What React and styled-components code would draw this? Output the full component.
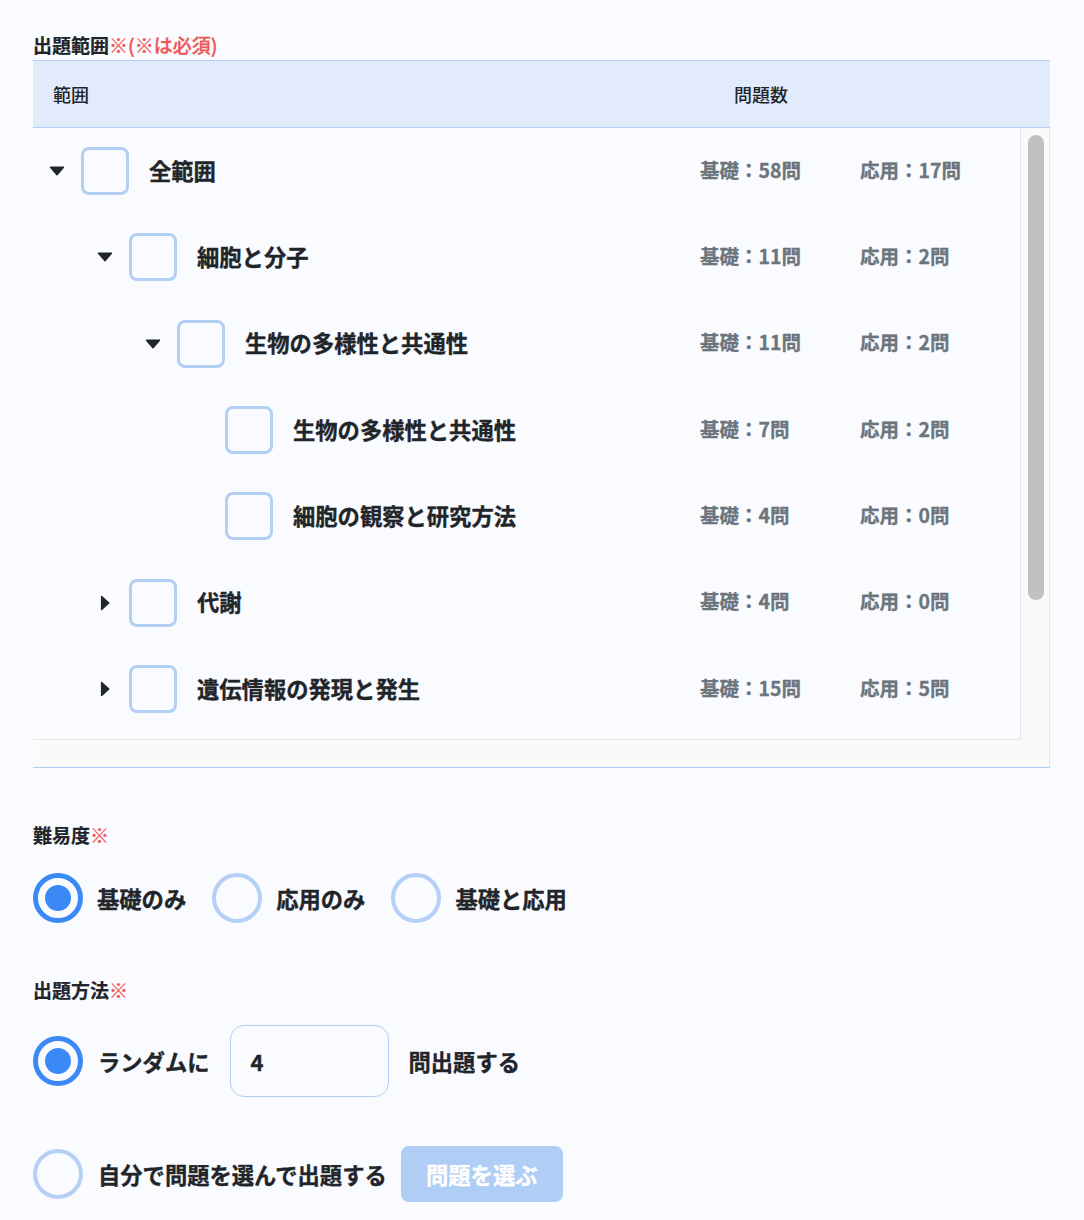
import React from "react";
import styled, { createGlobalStyle } from "styled-components";

const Global = createGlobalStyle`
  html, body { margin: 0; padding: 0; background: #f9fbff; }
  body {
    font-family: "Noto Sans CJK JP", "Noto Sans", sans-serif;
    color: #212529;
  }
  * { box-sizing: border-box; }
`;

const Page = styled.div`
  padding: 32px 34px 20px 33px;
  width: 1084px;
`;

const SectionTitle = styled.div`
  font-size: 19px;
  line-height: 26px;
  font-weight: 700;
  color: #212529;
  -webkit-text-stroke: 0.2px #212529;
  margin-top: ${(p) => p.$mt || 0}px;
`;

const Req = styled.span`
  color: #f05656;
  font-weight: 500;
  -webkit-text-stroke: 0.3px #f05656;
`;

const Table = styled.div`
  width: 1017px;
  margin-top: 2px;
`;

const Header = styled.div`
  display: grid;
  grid-template-columns: 1fr 120px 229px;
  align-items: center;
  height: 68px;
  background: #e1ebfb;
  border-top: 1px solid #b3cff6;
  border-bottom: 1px solid #b3cff6;
  font-size: 18px;
  font-weight: 500;
  color: #212529;
`;

const HeadCell = styled.div`
  padding-left: ${(p) => p.$pl || 0}px;
  text-align: ${(p) => p.$align || "left"};
`;

const Body = styled.div`
  display: grid;
  grid-template-columns: 1fr 28px;
  grid-template-rows: 612px 27px;
  background: #fafafa;
  border-right: 1px solid #e6e6e6;
  border-bottom: 1px solid #aecbf5;
`;

const Content = styled.div`
  background: #f9fbff;
  border-right: 1px solid #e6e6e6;
  border-bottom: 1px solid #e6e6e6;
  overflow: hidden;
`;

const Track = styled.div`
  padding: 7px 0 0 7px;
`;

const Thumb = styled.div`
  width: 16px;
  height: 465px;
  border-radius: 8px;
  background: #c1c1c1;
`;

const Row = styled.div`
  display: grid;
  grid-template-columns: 1fr 160px 160px;
  align-items: center;
  height: 86.33px;
`;

const NameCell = styled.div`
  display: flex;
  align-items: center;
  padding-left: ${(p) => 16 + p.$level * 48}px;
`;

const CaretBox = styled.div`
  width: 16px;
  height: 16px;
  display: flex;
  align-items: center;
  justify-content: center;
  margin-right: 16px;
  flex-shrink: 0;
`;

const Check = styled.div`
  width: 48px;
  height: 48px;
  border: 3px solid #b3cff6;
  border-radius: 8px;
  background: #f9fbff;
  flex-shrink: 0;
  margin-right: 20px;
`;

const Label = styled.span`
  font-size: 22.3px;
  line-height: 28px;
  margin-top: -3px;
  font-weight: 700;
  color: #212529;
  -webkit-text-stroke: 0.35px #212529;
  white-space: nowrap;
`;

const Count = styled.div`
  font-size: 19.5px;
  line-height: 26px;
  margin-top: -3px;
  font-weight: 700;
  color: #6c757d;
  -webkit-text-stroke: 0.3px #6c757d;
  white-space: nowrap;
`;

const Choices = styled.div`
  display: flex;
  align-items: center;
  margin-top: ${(p) => p.$mt || 0}px;
  min-height: ${(p) => p.$h || 50}px;
`;

const Radio = styled.span`
  width: 50px;
  height: 50px;
  border-radius: 50%;
  border: ${(p) => (p.$on ? "5px solid #3a89f7" : "4px solid #b5cff6")};
  display: flex;
  align-items: center;
  justify-content: center;
  flex-shrink: 0;
  background: #f9fbff;
  &::after {
    content: "";
    display: ${(p) => (p.$on ? "block" : "none")};
    width: 26px;
    height: 26px;
    border-radius: 50%;
    background: #3a89f7;
  }
`;

const RadioLabel = styled.span`
  font-size: 22.3px;
  font-weight: 700;
  color: #212529;
  -webkit-text-stroke: 0.35px #212529;
  margin-left: ${(p) => p.$ml || 14}px;
  margin-right: ${(p) => p.$mr || 0}px;
  white-space: nowrap;
`;

const NumInput = styled.div`
  width: 159px;
  height: 72px;
  border: 1px solid #b3cdf5;
  border-radius: 14px;
  display: flex;
  align-items: center;
  padding-left: 20px;
  font-size: 22px;
  font-weight: 700;
  color: #212529;
  -webkit-text-stroke: 0.35px #212529;
  background: #f9fbff;
`;

const PickButton = styled.button`
  height: 56px;
  width: 162px;
  border: none;
  border-radius: 8px;
  background: #afcdf5;
  color: #fff;
  font-family: inherit;
  font-size: 22.3px;
  font-weight: 700;
  -webkit-text-stroke: 0.35px #fff;
  margin-left: 14px;
  padding: 0;
`;

function Caret({ open }) {
  if (open) {
    return (
      <svg width="16" height="10" viewBox="0 0 16 10">
        <path d="M1.5 1.2 H14.5 L8 8.8 Z" fill="#212529" stroke="#212529" strokeWidth="1.4" strokeLinejoin="round" />
      </svg>
    );
  }
  return (
    <svg width="10" height="16" viewBox="0 0 10 16">
      <path d="M1.6 1.5 V14.5 L8.8 8 Z" fill="#212529" stroke="#212529" strokeWidth="1.4" strokeLinejoin="round" />
    </svg>
  );
}

const rows = [
  { level: 0, caret: "down", name: "全範囲", basic: 58, adv: 17 },
  { level: 1, caret: "down", name: "細胞と分子", basic: 11, adv: 2 },
  { level: 2, caret: "down", name: "生物の多様性と共通性", basic: 11, adv: 2 },
  { level: 3, caret: null, name: "生物の多様性と共通性", basic: 7, adv: 2 },
  { level: 3, caret: null, name: "細胞の観察と研究方法", basic: 4, adv: 0 },
  { level: 1, caret: "right", name: "代謝", basic: 4, adv: 0 },
  { level: 1, caret: "right", name: "遺伝情報の発現と発生", basic: 15, adv: 5 },
];

export default function App() {
  return (
    <>
      <Global />
      <Page>
        <SectionTitle>
          出題範囲<Req>※(※は必須)</Req>
        </SectionTitle>
        <Table>
          <Header>
            <HeadCell $pl={20}>範囲</HeadCell>
            <HeadCell $align="center">問題数</HeadCell>
            <HeadCell />
          </Header>
          <Body>
            <Content>
              {rows.map((r, i) => (
                <Row key={i}>
                  <NameCell $level={r.level}>
                    <CaretBox>{r.caret && <Caret open={r.caret === "down"} />}</CaretBox>
                    <Check />
                    <Label>{r.name}</Label>
                  </NameCell>
                  <Count>基礎：{r.basic}問</Count>
                  <Count>応用：{r.adv}問</Count>
                </Row>
              ))}
            </Content>
            <Track>
              <Thumb />
            </Track>
            <div />
            <div />
          </Body>
        </Table>

        <SectionTitle $mt={54}>
          難易度<Req>※</Req>
        </SectionTitle>
        <Choices $mt={25}>
          <Radio $on />
          <RadioLabel $mr={26}>基礎のみ</RadioLabel>
          <Radio />
          <RadioLabel $mr={26}>応用のみ</RadioLabel>
          <Radio />
          <RadioLabel>基礎と応用</RadioLabel>
        </Choices>

        <SectionTitle $mt={54}>
          出題方法<Req>※</Req>
        </SectionTitle>
        <Choices $mt={22} $h={72}>
          <Radio $on />
          <RadioLabel $ml={15} $mr={20}>ランダムに</RadioLabel>
          <NumInput>4</NumInput>
          <RadioLabel $ml={20}>問出題する</RadioLabel>
        </Choices>
        <Choices $mt={49} $h={56}>
          <Radio />
          <RadioLabel $ml={15}>自分で問題を選んで出題する</RadioLabel>
          <PickButton>問題を選ぶ</PickButton>
        </Choices>
      </Page>
    </>
  );
}
